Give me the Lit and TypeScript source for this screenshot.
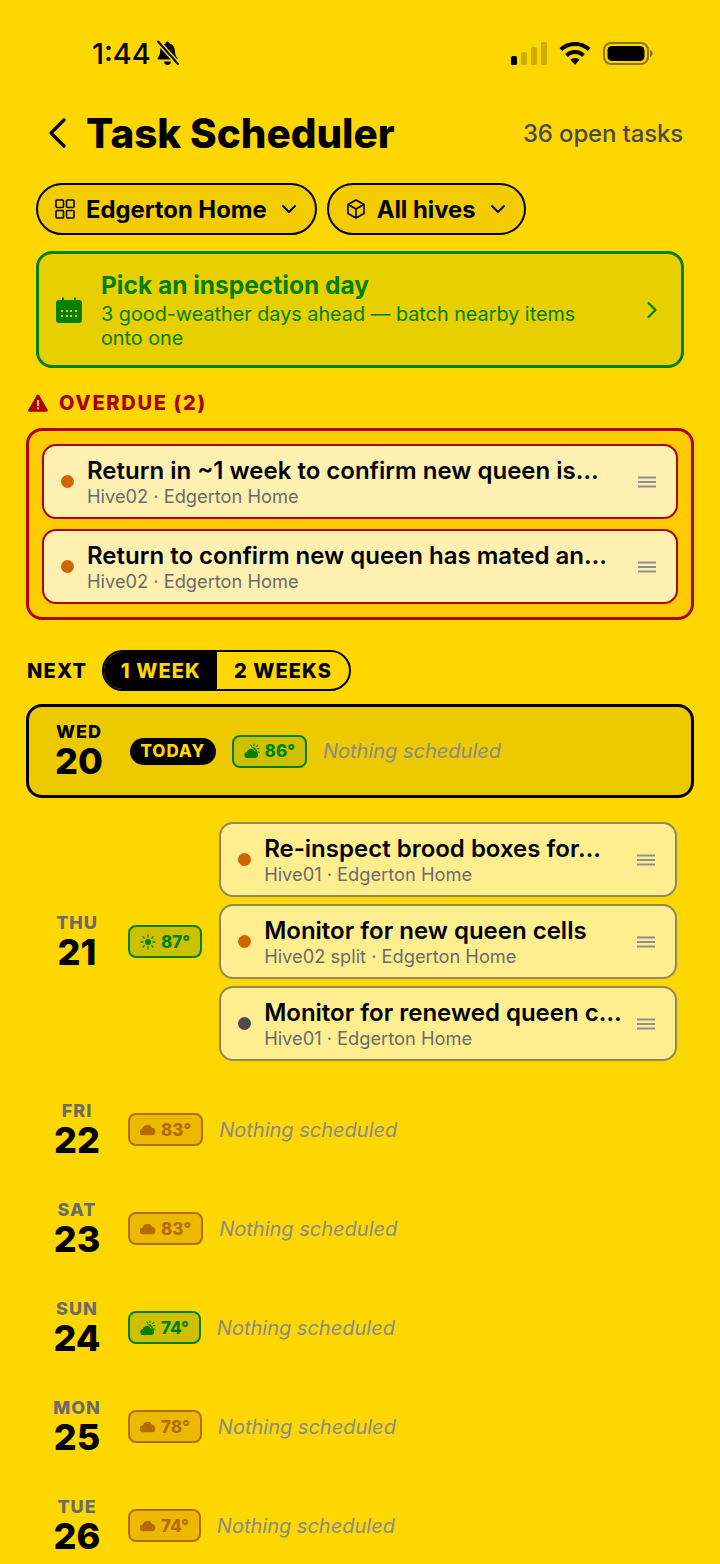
import { LitElement, css, html, svg } from 'lit';
import { customElement } from 'lit/decorators.js';

type Weather = 'sun' | 'partly' | 'cloud';

interface Task {
  title: string;
  sub: string;
  dot: string;
}

interface Day {
  name: string;
  num: string;
  temp: string;
  weather: Weather;
  good: boolean;
  tasks?: Task[];
}

const ORANGE = '#cc6600';
const GREY = '#4a4a4a';

const OVERDUE: Task[] = [
  { title: 'Return in ~1 week to confirm new queen is…', sub: 'Hive02 · Edgerton Home', dot: ORANGE },
  { title: 'Return to confirm new queen has mated an…', sub: 'Hive02 · Edgerton Home', dot: ORANGE },
];

const DAYS: Day[] = [
  {
    name: 'THU',
    num: '21',
    temp: '87°',
    weather: 'sun',
    good: true,
    tasks: [
      { title: 'Re-inspect brood boxes for…', sub: 'Hive01 · Edgerton Home', dot: ORANGE },
      { title: 'Monitor for new queen cells', sub: 'Hive02 split · Edgerton Home', dot: ORANGE },
      { title: 'Monitor for renewed queen c…', sub: 'Hive01 · Edgerton Home', dot: GREY },
    ],
  },
  { name: 'FRI', num: '22', temp: '83°', weather: 'cloud', good: false },
  { name: 'SAT', num: '23', temp: '83°', weather: 'cloud', good: false },
  { name: 'SUN', num: '24', temp: '74°', weather: 'partly', good: true },
  { name: 'MON', num: '25', temp: '78°', weather: 'cloud', good: false },
  { name: 'TUE', num: '26', temp: '74°', weather: 'cloud', good: false },
];

const CLOUD = 'M6 19.5a4.5 4.5 0 0 1-.6-8.96A6.5 6.5 0 0 1 17.6 9.6 5 5 0 0 1 18 19.5z';

function weatherIcon(kind: Weather) {
  if (kind === 'sun') {
    return html`<svg class="wx" viewBox="0 0 24 24" fill="none" stroke="currentColor" stroke-width="2" stroke-linecap="round">
      <circle cx="12" cy="12" r="4.6" fill="currentColor" stroke="none"></circle>
      <path d="M12 1.5v3M12 19.5v3M1.5 12h3M19.5 12h3M4.6 4.6l2 2M17.4 17.4l2 2M4.6 19.400l2-2M17.4 6.6l2-2"></path>
    </svg>`;
  }
  if (kind === 'partly') {
    return html`<svg class="wx" viewBox="0 0 24 24" fill="currentColor">
      <path d="M5 22.500a4.500 4.500 0 0 1-.6-8.960A6 6 0 0 1 15.800 12.500 5 5 0 0 1 16.400 22.500z"></path>
      <path d="M10.800 7.400a5.400 5.400 0 0 1 8 6.400 6.600 6.600 0 0 0-2-2.400 7.600 7.600 0 0 0-6-4z"></path>
      <path d="M15 1.500v2.600M22.500 8.500h-2.600M20.500 3.500l-1.800 1.800M10 3l1.400 1.800M22.500 14l-2.200-.8" stroke="currentColor" stroke-width="1.600" stroke-linecap="round"></path>
    </svg>`;
  }
  return html`<svg class="wx" viewBox="2 2 21 21" fill="currentColor"><path d=${CLOUD}></path></svg>`;
}

const handle = html`<svg class="handle" viewBox="0 0 18 12" fill="#8f8f8f">
  <rect x="0" y="0.5" width="18" height="2"></rect>
  <rect x="0" y="5" width="18" height="2"></rect>
  <rect x="0" y="9.5" width="18" height="2"></rect>
</svg>`;

const chevronDown = html`<svg class="caret" viewBox="0 0 16 10" fill="none" stroke="currentColor" stroke-width="1.9" stroke-linecap="round" stroke-linejoin="round"><path d="M2 2l6 6 6-6"></path></svg>`;

const signalBars = [
  { x: 0, y: 14, h: 9, o: 1 },
  { x: 10, y: 10, h: 13, o: 0.2 },
  { x: 20, y: 5, h: 18, o: 0.2 },
  { x: 30, y: 0, h: 23, o: 0.2 },
];

@customElement('app-root')
export class AppRoot extends LitElement {
  static override styles = css`
    :host {
      display: block;
      height: 1564px;
      overflow: hidden;
      background: #ffd700;
      color: #000;
      font-family: Inter, 'Liberation Sans', sans-serif;
    }

    .status {
      display: flex;
      align-items: center;
      justify-content: space-between;
      height: 40px;
      padding: 33px 67px 0 92px;
    }
    .clock {
      display: flex;
      align-items: center;
      gap: 4px;
      font-size: 29px;
      font-weight: 500;
    }
    .status-icons {
      display: flex;
      align-items: center;
      gap: 12px;
    }

    .header {
      display: flex;
      align-items: center;
      height: 44px;
      margin-top: 38px;
      padding: 0 37px 0 48px;
    }
    .header h1 {
      margin: 0 0 0 19px;
      font-size: 40.4px;
      font-weight: 800;
      flex: 1;
    }
    .count {
      font-size: 24px;
      font-weight: 500;
      letter-spacing: -0.15px;
      color: #4a4a4a;
    }

    .filters {
      display: flex;
      gap: 10px;
      margin-top: 28px;
      padding-left: 36px;
    }
    .pill {
      display: flex;
      align-items: center;
      box-sizing: border-box;
      height: 52px;
      border: 2.5px solid #000;
      border-radius: 26px;
      background: #f2cc00;
      padding: 0 18px 0 16px;
      font-size: 23.8px;
      font-weight: 700;
    }
    .pill .lead {
      margin-right: 10px;
    }
    .pill .caret {
      width: 16px;
      height: 10px;
      margin-left: 14px;
    }

    .banner {
      display: flex;
      align-items: center;
      box-sizing: border-box;
      margin: 16px 36px 0;
      height: 117px;
      padding: 0 23px 0 17px;
      border: 3px solid #008000;
      border-radius: 16px;
      background: #e8cf00;
      color: #008000;
    }
    .banner .text {
      flex: 1;
      margin-left: 19px;
    }
    .banner .title {
      font-size: 24.5px;
      font-weight: 700;
      line-height: 30px;
    }
    .banner .desc {
      font-size: 19.8px;
      line-height: 24px;
      margin-top: 2px;
      padding-right: 40px;
    }

    .section-label {
      display: flex;
      align-items: center;
      gap: 11px;
      margin: 22px 0 0 28px;
      height: 26px;
      font-size: 20px;
      font-weight: 800;
      letter-spacing: 1.7px;
      color: #aa0000;
    }

    .overdue {
      box-sizing: border-box;
      display: flex;
      flex-direction: column;
      gap: 10px;
      margin: 12px 26px 0;
      padding: 13px;
      border: 3px solid #b00000;
      border-radius: 16px;
      background: #ffcc00;
    }

    .task {
      display: flex;
      align-items: center;
      box-sizing: border-box;
      height: 75px;
      padding: 0 20px 0 17px;
      border: 2px solid #b00000;
      border-radius: 14px;
      background: #fdf0b0;
      min-width: 0;
    }
    .dot {
      flex: none;
      width: 13px;
      height: 13px;
      border-radius: 50%;
      margin-right: 13px;
    }
    .task .body {
      flex: 1;
      min-width: 0;
      padding-right: 12px;
    }
    .task .title {
      font-size: 24px;
      font-weight: 600;
      line-height: 29px;
      white-space: nowrap;
    }
    .task .sub {
      font-size: 18.25px;
      line-height: 23px;
      color: #6b6b6b;
    }
    .handle {
      flex: none;
      width: 18px;
      height: 12px;
    }

    .next {
      display: flex;
      align-items: center;
      gap: 15px;
      margin: 30px 0 0 27px;
    }
    .next .label {
      font-size: 20px;
      font-weight: 800;
      letter-spacing: 1.2px;
    }
    .toggle {
      display: flex;
      box-sizing: border-box;
      height: 41px;
      border: 2.5px solid #000;
      border-radius: 21px;
      overflow: hidden;
      font-size: 20px;
      font-weight: 800;
      letter-spacing: 1.1px;
    }
    .toggle span {
      display: flex;
      align-items: center;
      padding: 0 16.5px;
    }
    .toggle .on {
      background: #000;
      color: #ffd700;
    }

    .today {
      display: flex;
      align-items: center;
      box-sizing: border-box;
      height: 94px;
      margin: 13px 26px 0;
      padding-left: 25px;
      border: 3px solid #000;
      border-radius: 16px;
      background: #edc900;
    }
    .today .date {
      color: #000;
    }
    .today-tag {
      display: flex;
      align-items: center;
      height: 27px;
      margin-left: 26px;
      padding: 0 10.500px;
      border-radius: 14px;
      background: #000;
      color: #ffd700;
      font-size: 17px;
      font-weight: 800;
      letter-spacing: 0.9px;
    }
    .today .wx-badge {
      margin-left: 16px;
    }

    .date {
      flex: none;
      width: 50px;
      display: flex;
      flex-direction: column;
      align-items: center;
    }
    .date .name {
      font-size: 18px;
      font-weight: 800;
      line-height: 20px;
      letter-spacing: 1px;
      color: #6b6b6b;
    }
    .today .date .name {
      color: #000;
    }
    .date .num {
      font-size: 36px;
      font-weight: 800;
      line-height: 38px;
    }

    .days {
      margin-top: 24px;
    }
    .day {
      display: flex;
      align-items: center;
      min-height: 75px;
      padding-left: 52px;
      margin-bottom: 24px;
    }
    .day.has-tasks {
      margin-bottom: 31px;
    }
    .day > .wx-badge {
      margin-left: 26px;
    }

    .wx-badge {
      flex: none;
      display: flex;
      align-items: center;
      gap: 5px;
      box-sizing: border-box;
      height: 33px;
      padding: 0 10px;
      border-radius: 8px;
      border: 2px solid;
      font-size: 17px;
      font-weight: 800;
    }
    .wx-badge.good {
      color: #008000;
      border-color: #008000;
      background: #cdc000;
    }
    .wx-badge.bad {
      color: #b36b00;
      border-color: #b36b00;
      background: #edb900;
    }
    .wx {
      width: 16px;
      height: 16px;
    }

    .nothing {
      margin-left: 16px;
      font-size: 20px;
      font-style: italic;
      color: #8a8a8a;
    }

    .tasks {
      flex: 1;
      min-width: 0;
      display: flex;
      flex-direction: column;
      gap: 7px;
      margin: 0 43px 0 17px;
    }
    .tasks .task {
      border-color: #8f8a5a;
      background: #ffee90;
    }
  `;

  private renderTask(t: Task) {
    return html`<div class="task">
      <span class="dot" style="background:${t.dot}"></span>
      <div class="body">
        <div class="title">${t.title}</div>
        <div class="sub">${t.sub}</div>
      </div>
      ${handle}
    </div>`;
  }

  private renderBadge(d: { temp: string; weather: Weather; good: boolean }) {
    return html`<span class="wx-badge ${d.good ? 'good' : 'bad'}">${weatherIcon(d.weather)}${d.temp}</span>`;
  }

  private renderDate(name: string, num: string) {
    return html`<div class="date">
      <span class="name">${name}</span>
      <span class="num">${num}</span>
    </div>`;
  }

  private renderStatus() {
    return html`<div class="status">
      <div class="clock">
        1:44
        <svg width="25" height="26" viewBox="0 0 24 26" fill="#000">
          <path d="M12 1.5a2 2 0 0 1 2 2c3.6.9 5.4 3.8 5.4 7.6 0 3.2.9 5.2 2.4 7 .5.6.1 1.4-.7 1.4H2.9c-.8 0-1.2-.8-.7-1.4 1.5-1.8 2.4-3.8 2.4-7 0-3.8 1.8-6.7 5.4-7.6a2 2 0 0 1 2-2z"></path>
          <path d="M8.6 21.6h6.8a3.4 3.4 0 0 1-6.8 0z"></path>
          <path d="M2.5 1.5l20 22.5" stroke="#ffd700" stroke-width="5"></path>
          <path d="M2.5 1.5l20 22.5" stroke="#000" stroke-width="2" stroke-linecap="round"></path>
        </svg>
      </div>
      <div class="status-icons">
        <svg width="36" height="23" viewBox="0 0 36 23">
          ${signalBars.map(
            (b) => svg`<rect x=${b.x} y=${b.y} width="6" height=${b.h} rx="1.6" fill="#000" opacity=${b.o}></rect>`
          )}
        </svg>
        <svg width="32" height="23" viewBox="0 0 32 23" fill="#000">
          <path d="M16 0c6 0 11.500 2.300 15.500 6.100l-2.700 3C25.400 5.900 20.900 4 16 4S6.600 5.900 3.200 9.100l-2.700-3C4.500 2.300 10 0 16 0z"></path>
          <path d="M16 8c3.800 0 7.300 1.500 9.900 3.900l-2.800 3C21.300 13.100 18.800 12 16 12s-5.300 1.100-7.100 2.900l-2.800-3C8.700 9.500 12.200 8 16 8z"></path>
          <path d="M16 16c1.800 0 3.400.7 4.500 1.800L16 23l-4.500-5.200C12.600 16.700 14.200 16 16 16z"></path>
        </svg>
        <svg width="50" height="23" viewBox="0 0 50 23">
          <rect x="1" y="1" width="44" height="21" rx="7" fill="none" stroke="#000" stroke-opacity="0.45" stroke-width="2"></rect>
          <rect x="4.500" y="4" width="37" height="15" rx="4.500" fill="#000"></rect>
          <path d="M47 8c1.600.5 2.600 1.900 2.600 3.500S48.600 14.500 47 15z" fill="#000" fill-opacity="0.45"></path>
        </svg>
      </div>
    </div>`;
  }

  override render() {
    return html`
      ${this.renderStatus()}

      <div class="header">
        <svg width="19" height="30" viewBox="0 0 19 30" fill="none" stroke="#000" stroke-width="3.200" stroke-linecap="round" stroke-linejoin="round">
          <path d="M16 2L3 15l13 13"></path>
        </svg>
        <h1>Task Scheduler</h1>
        <span class="count">36 open tasks</span>
      </div>

      <div class="filters">
        <div class="pill">
          <svg class="lead" width="22" height="22" viewBox="0 0 22 22" fill="none" stroke="#000" stroke-width="1.600">
            <rect x="2" y="2" width="7.500" height="7.500" rx="1"></rect>
            <rect x="12.500" y="2" width="7.500" height="7.500" rx="1"></rect>
            <rect x="2" y="12.500" width="7.500" height="7.500" rx="1"></rect>
            <rect x="12.500" y="12.500" width="7.500" height="7.500" rx="1"></rect>
          </svg>
          Edgerton Home${chevronDown}
        </div>
        <div class="pill">
          <svg class="lead" width="22" height="22" viewBox="0 0 22 22" fill="none" stroke="#000" stroke-width="1.600" stroke-linejoin="round">
            <path d="M11 2l8 4.500v9L11 20l-8-4.500v-9z"></path>
            <path d="M3 6.500l8 4.500 8-4.500M11 11v9"></path>
          </svg>
          All hives${chevronDown}
        </div>
      </div>

      <div class="banner">
        <svg width="26" height="26" viewBox="0 0 26 26" fill="#008000">
          <path d="M6 0.500h2V3h10V0.500h2V3h3a3 3 0 0 1 3 3v3H0V6a3 3 0 0 1 3-3h3z"></path>
          <path fill-rule="evenodd" d="M0 8.500h26V23a3 3 0 0 1-3 3H3a3 3 0 0 1-3-3zM5 15h2v-2H5zm5 0h2v-2h-2zm4 0h2v-2h-2zm5 0h2v-2h-2zM5 20h2v-2H5zm5 0h2v-2h-2zm4 0h2v-2h-2zm5 0h2v-2h-2z"></path>
        </svg>
        <div class="text">
          <div class="title">Pick an inspection day</div>
          <div class="desc">3 good-weather days ahead — batch nearby items onto one</div>
        </div>
        <svg width="12" height="18" viewBox="0 0 12 18" fill="none" stroke="#008000" stroke-width="2.200" stroke-linecap="round" stroke-linejoin="round">
          <path d="M2.500 2l7 7-7 7"></path>
        </svg>
      </div>

      <div class="section-label">
        <svg width="20" height="18" viewBox="0 0 20 18">
          <path d="M10 0.500c.6 0 1 .3 1.300.8l8.300 14.500c.5.900-.1 1.900-1.100 1.900H1.500c-1 0-1.600-1-1.100-1.900L8.700 1.300C9 .8 9.400.500 10 .500z" fill="#aa0000"></path>
          <rect x="9" y="6" width="2" height="6" fill="#ffd700"></rect>
          <rect x="9" y="13.300" width="2" height="2" fill="#ffd700"></rect>
        </svg>
        OVERDUE (2)
      </div>

      <div class="overdue">${OVERDUE.map((t) => this.renderTask(t))}</div>

      <div class="next">
        <span class="label">NEXT</span>
        <div class="toggle">
          <span class="on">1 WEEK</span>
          <span>2 WEEKS</span>
        </div>
      </div>

      <div class="today">
        ${this.renderDate('WED', '20')}
        <span class="today-tag">TODAY</span>
        ${this.renderBadge({ temp: '86°', weather: 'partly', good: true })}
        <span class="nothing">Nothing scheduled</span>
      </div>

      <div class="days">
        ${DAYS.map(
          (d) => html`<div class="day ${d.tasks ? 'has-tasks' : ''}">
            ${this.renderDate(d.name, d.num)}
            ${this.renderBadge(d)}
            ${d.tasks
              ? html`<div class="tasks">${d.tasks.map((t) => this.renderTask(t))}</div>`
              : html`<span class="nothing">Nothing scheduled</span>`}
          </div>`
        )}
      </div>
    `;
  }
}

declare global {
  interface HTMLElementTagNameMap {
    'app-root': AppRoot;
  }
}
